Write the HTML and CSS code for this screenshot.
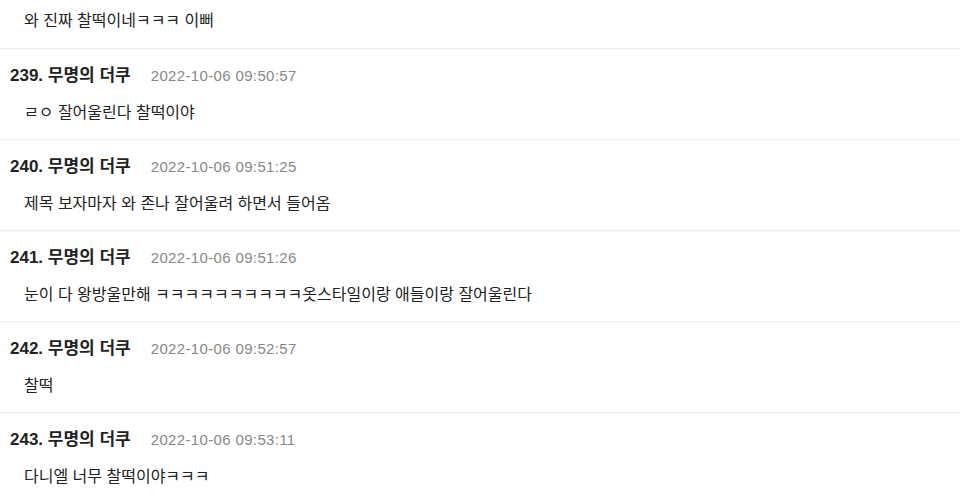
FILE: index.html
```html
<!DOCTYPE html>
<html lang="ko">
<head>
    <meta charset="UTF-8">
    <meta name="viewport" content="width=device-width, initial-scale=1.0">
    <title>댓글</title>
    <link rel="stylesheet" href="styles.css">
</head>
<body>
    <div class="comments">
        <div class="comment first">
            <p class="comment-body">와 진짜 찰떡이네ㅋㅋㅋ 이뻐</p>
        </div>

        <div class="comment">
            <div class="comment-head">
                <span class="author">239. 무명의 더쿠</span>
                <span class="date">2022-10-06 09:50:57</span>
            </div>
            <p class="comment-body">ㄹㅇ 잘어울린다 찰떡이야</p>
        </div>

        <div class="comment">
            <div class="comment-head">
                <span class="author">240. 무명의 더쿠</span>
                <span class="date">2022-10-06 09:51:25</span>
            </div>
            <p class="comment-body">제목 보자마자 와 존나 잘어울려 하면서 들어옴</p>
        </div>

        <div class="comment">
            <div class="comment-head">
                <span class="author">241. 무명의 더쿠</span>
                <span class="date">2022-10-06 09:51:26</span>
            </div>
            <p class="comment-body">눈이 다 왕방울만해 ㅋㅋㅋㅋㅋㅋㅋㅋㅋㅋ옷스타일이랑 애들이랑 잘어울린다</p>
        </div>

        <div class="comment">
            <div class="comment-head">
                <span class="author">242. 무명의 더쿠</span>
                <span class="date">2022-10-06 09:52:57</span>
            </div>
            <p class="comment-body">찰떡</p>
        </div>

        <div class="comment">
            <div class="comment-head">
                <span class="author">243. 무명의 더쿠</span>
                <span class="date">2022-10-06 09:53:11</span>
            </div>
            <p class="comment-body">다니엘 너무 찰떡이야ㅋㅋㅋ</p>
        </div>
    </div>
</body>
</html>
```

FILE: styles.css
```css
* { margin: 0; padding: 0; box-sizing: border-box; }
body {
    font-family: 'Liberation Sans', 'Noto Sans CJK KR', sans-serif;
    background: #fff;
    color: #222;
}
.comments {
    width: 100%;
}
.comment {
    padding: 16px 10px 15px;
    border-top: 1px solid #ededed;
    box-shadow: inset 0 1px 0 #f7f7f7;
}
.comment.first {
    padding-top: 10px;
    padding-bottom: 16px;
    border-top: none;
    box-shadow: none;
}
.comment-head {
    display: flex;
    align-items: baseline;
    gap: 20px;
    line-height: 22px;
}
.author {
    font-size: 17px;
    font-weight: bold;
    color: #222;
}
.date {
    font-size: 15px;
    color: #888;
    letter-spacing: 0.35px;
}
.comment-body {
    margin-top: 15px;
    padding-left: 14px;
    font-size: 16px;
    line-height: 22px;
    color: #222;
}
.comment.first .comment-body {
    margin-top: 0;
}
```
